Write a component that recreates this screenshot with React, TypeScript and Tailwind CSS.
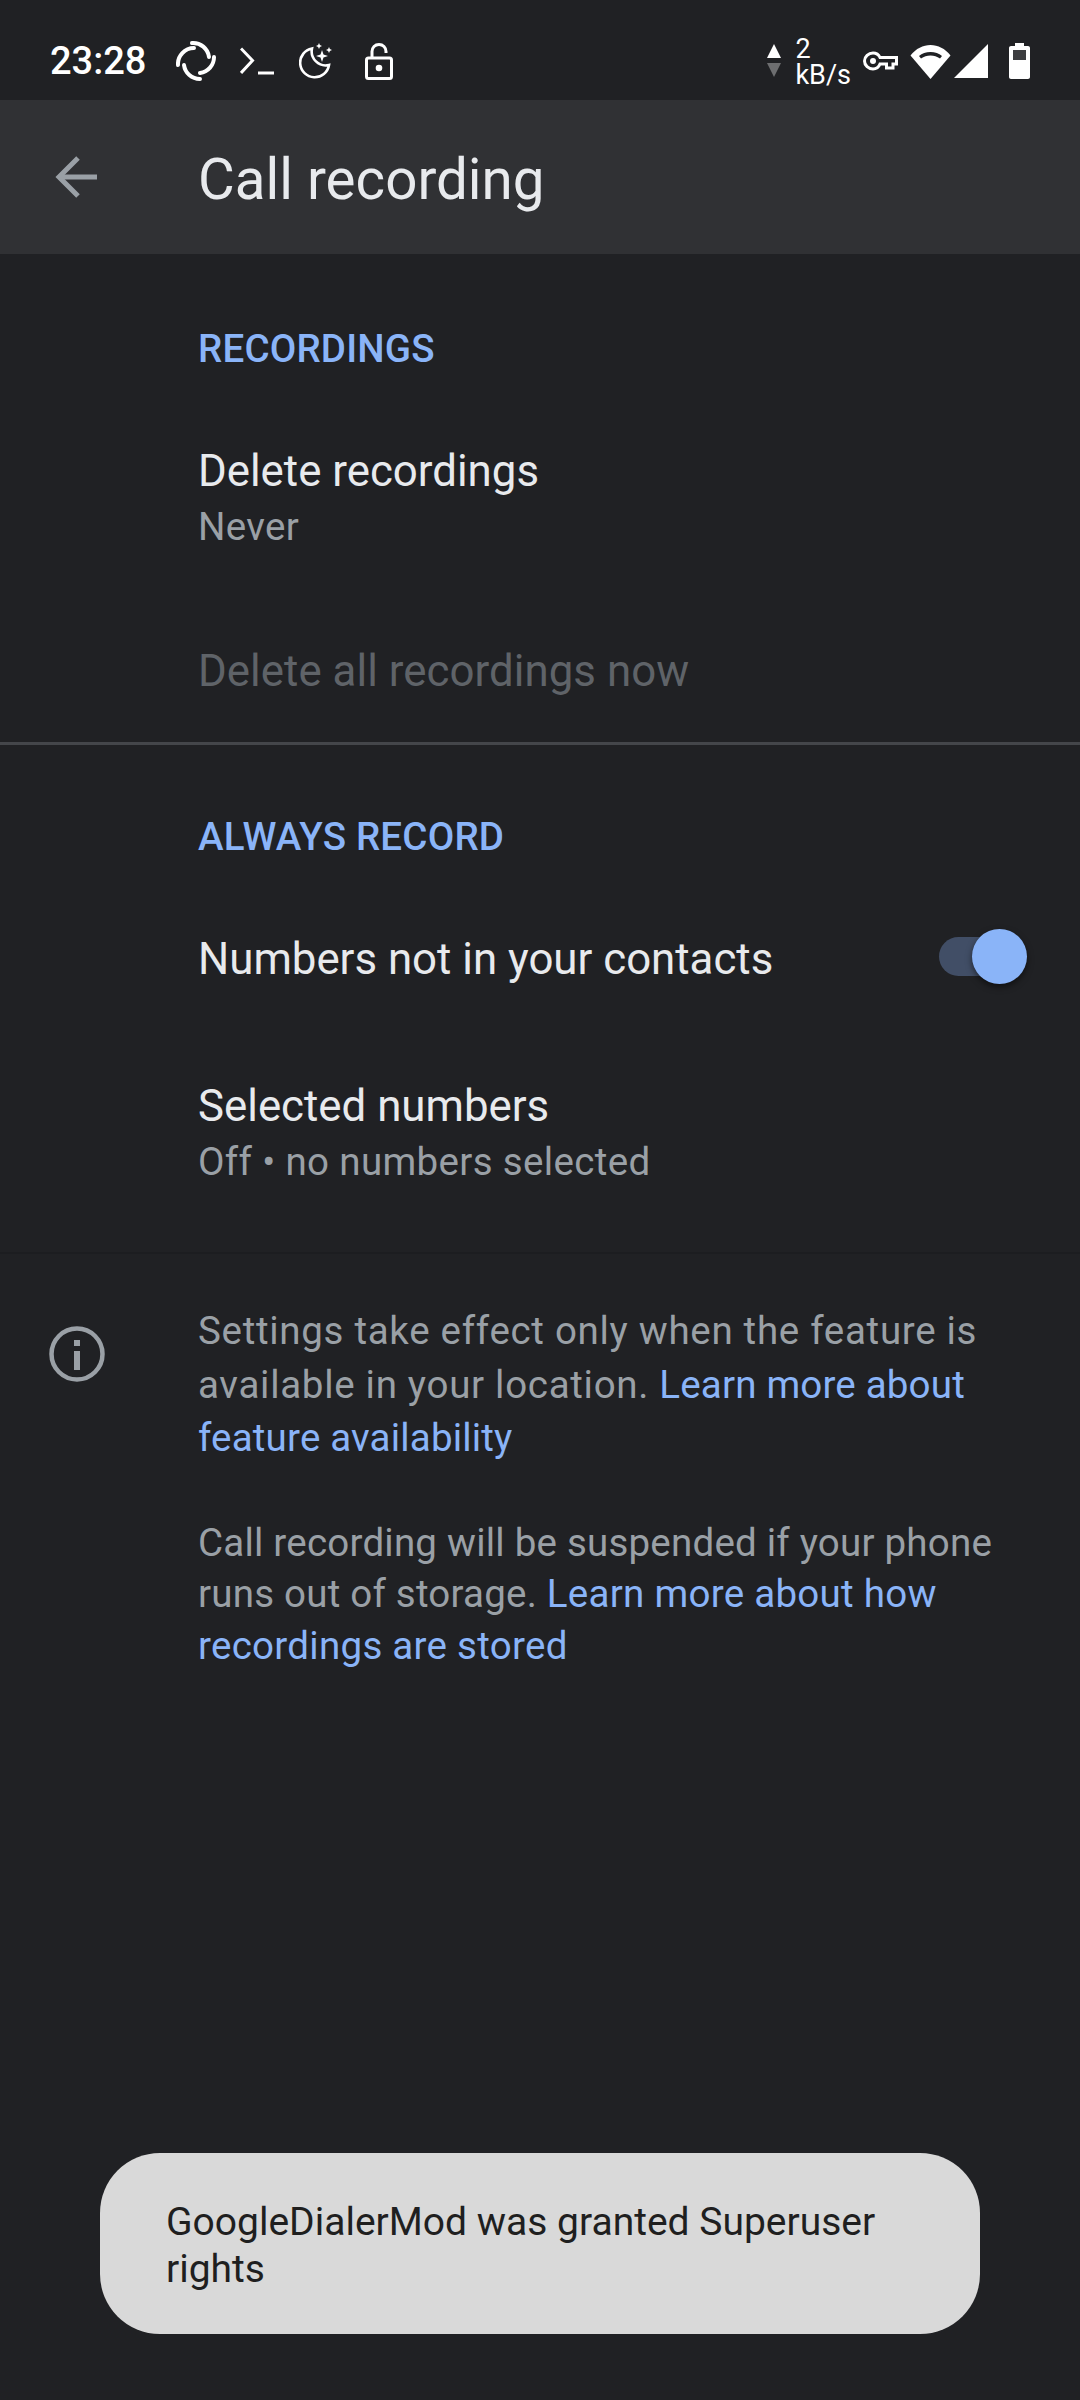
const sans = "font-['Roboto','Liberation_Sans',sans-serif]";

function ElementIcon() {
	return (
		<svg width="40" height="42" viewBox="0 0 40 42" fill="none" stroke="white" strokeWidth="4" strokeLinecap="round">
			<path d="M16 3A16 16 0 0 1 33 17" />
			<path d="M38 17A16 16 0 0 1 24 33" />
			<path d="M24 39A16 16 0 0 1 8 25" />
			<path d="M2 25A16 16 0 0 1 18 8" />
		</svg>
	);
}

function TerminalIcon() {
	return (
		<svg width="34" height="28" viewBox="0 0 34 28" fill="none" stroke="white" strokeWidth="3">
			<path d="M1 1.500L12.500 13.500L1 26" />
			<path d="M18 26H34" />
		</svg>
	);
}

function MoonIcon() {
	return (
		<svg width="34" height="36" viewBox="0 0 34 36" fill="none">
			<path d="M13 5.500A14.500 14.500 0 1 0 30 22A14 14 0 0 1 13 5.500Z" stroke="white" strokeWidth="2.600" />
			<path d="M23 7L24.500 11.500L29 13L24.500 14.500L23 19L21.500 14.500L17 13L21.500 11.500Z" fill="white" />
			<path d="M20 0L20.900 2.100L23 3L20.900 3.900L20 6L19.100 3.900L17 3L19.100 2.100Z" fill="white" />
			<path d="M30 4L30.900 6.100L33 7L30.900 7.900L30 10L29.100 7.900L27 7L29.100 6.100Z" fill="white" />
		</svg>
	);
}

function LockIcon() {
	return (
		<svg width="28" height="37" viewBox="0 0 28 37" fill="none" stroke="white" strokeWidth="3">
			<rect x="1.500" y="15" width="25" height="20.500" rx="2" />
			<path d="M7 15V8.500C7 4.500 10 1.500 14 1.500C18 1.500 21 4.500 21 8.500V10" />
			<circle cx="14" cy="25" r="3.300" fill="white" stroke="none" />
		</svg>
	);
}

function TrafficArrows() {
	return (
		<svg width="16" height="34" viewBox="0 0 16 34">
			<path d="M8 0L15 14H1Z" fill="white" />
			<path d="M1 19H15L8 33Z" fill="white" opacity="0.35" />
		</svg>
	);
}

function KeyIcon() {
	return (
		<svg width="35" height="20" viewBox="0 0 35 20" fill="none">
			<path d="M10 2C13.500 2 15.800 3.800 17 6.500H33.500V13H30V17H23.500V13H17C15.800 16 13.500 18 10 18C5.500 18 1.500 14.500 1.500 10C1.500 5.500 5.500 2 10 2Z" stroke="white" strokeWidth="3" />
			<circle cx="10" cy="10" r="3" fill="white" />
		</svg>
	);
}

function WifiIcon() {
	return (
		<svg width="41" height="35" viewBox="0 0 41 35" fill="none">
			<path d="M20.500 35L0.500 11.500C6 4.500 13 1 20.500 1C28 1 35 4.500 40.500 11.500Z" fill="white" />
			<path d="M9 12C12 9.500 16 8 20.500 8C25 8 29 9.500 32 12L30 14.500C27 12.500 24 11.500 20.500 11.500C17 11.500 14 12.500 11 14.500Z" fill="#202124" />
		</svg>
	);
}

function SignalIcon() {
	return (
		<svg width="34" height="34" viewBox="0 0 34 34">
			<path d="M34 0V34H0Z" fill="white" />
		</svg>
	);
}

function BatteryIcon() {
	return (
		<svg width="21" height="36" viewBox="0 0 21 36">
			<path d="M6 0H15V3H19C20.100 3 21 3.900 21 5V34C21 35.100 20.100 36 19 36H2C0.900 36 0 35.100 0 34V5C0 3.900 0.900 3 2 3H6Z" fill="white" />
			<rect x="4" y="7" width="13" height="10" fill="#3c3d40" />
		</svg>
	);
}

function StatusBar() {
	return (
		<div className="flex h-[100px] items-center bg-[#202124] pt-[22px] pr-[50px] pl-[50px] text-white">
			<span className="mr-[30px] text-[38px] leading-none font-medium">23:28</span>
			<ElementIcon />
			<span className="ml-[24px]"><TerminalIcon /></span>
			<span className="ml-[25px]"><MoonIcon /></span>
			<span className="ml-[32px]"><LockIcon /></span>
			<div className="ml-auto flex items-center">
				<TrafficArrows />
				<div className="mt-[2px] ml-[13px] flex flex-col text-[27px] leading-[26px]">
					<span>2</span>
					<span>kB/s</span>
				</div>
				<span className="ml-[12px]"><KeyIcon /></span>
				<span className="ml-[12px]"><WifiIcon /></span>
				<span className="ml-[3px]"><SignalIcon /></span>
				<span className="ml-[21px]"><BatteryIcon /></span>
			</div>
		</div>
	);
}

function ToolBar() {
	return (
		<div className="flex h-[154px] items-center bg-[#303134]">
			<svg className="ml-[54px]" width="44" height="44" viewBox="0 0 44 44" fill="none" stroke="#9aa0a6" strokeWidth="5">
				<path d="M43 22H5" />
				<path d="M24 3L5 22L24 41" />
			</svg>
			<h1 className="mt-[7px] ml-[100px] text-[56.500px] leading-none text-[#e8eaed]">Call recording</h1>
		</div>
	);
}

function SectionTitle({ children }: { children: string }) {
	return <div className="text-[38.500px] leading-[52px] font-medium tracking-[0.2px] text-[#8ab4f8]">{children}</div>;
}

function TwoLineRow({ title, summary }: { title: string; summary: string }) {
	return (
		<div>
			<div className="text-[43.800px] leading-[56px] text-[#e8eaed]">{title}</div>
			<div className="text-[38.500px] leading-[56px] tracking-[0.35px] text-[#9aa0a6]">{summary}</div>
		</div>
	);
}

function Toggle() {
	return (
		<div className="relative mb-[6px] h-[39px] w-[88px]">
			<div className="absolute top-0 left-0 h-[39px] w-[71px] rounded-full bg-[#414e66]" />
			<div className="absolute top-[-8px] right-0 h-[55px] w-[55px] rounded-full bg-[#8ab4f8] shadow-[0_3px_6px_rgba(0,0,0,0.5)]" />
		</div>
	);
}

function InfoIcon() {
	return (
		<svg width="56" height="56" viewBox="0 0 56 56" fill="none">
			<circle cx="28" cy="28" r="25.500" stroke="#9aa0a6" strokeWidth="4.500" />
			<rect x="25" y="25" width="6" height="19" fill="#9aa0a6" />
			<rect x="25" y="14" width="6" height="6" fill="#9aa0a6" />
		</svg>
	);
}

export default function App() {
	return (
		<div className={`relative flex h-[2400px] w-[1080px] flex-col overflow-hidden bg-[#202124] ${sans}`}>
			<StatusBar />
			<ToolBar />

			<div className="pt-[69px] pl-[198px]">
				<SectionTitle>RECORDINGS</SectionTitle>
				<div className="mt-[68px]">
					<TwoLineRow title="Delete recordings" summary="Never" />
				</div>
				<div className="mt-[88px] text-[43.800px] leading-[56px] tracking-[0.05px] text-[#5f6368]">Delete all recordings now</div>
			</div>

			<div className="mt-[43px] h-[3px] bg-[#44464a]" />

			<div className="pt-[66px] pl-[198px]">
				<SectionTitle>ALWAYS RECORD</SectionTitle>
				<div className="mt-[68px] flex items-center justify-between pr-[53px]">
					<div className="text-[43.800px] leading-[56px] text-[#e8eaed]">Numbers not in your contacts</div>
					<Toggle />
				</div>
				<div className="mt-[91px]">
					<TwoLineRow title="Selected numbers" summary="Off • no numbers selected" />
				</div>
			</div>

			<div className="mt-[62px] h-[2px] bg-[#1c1d20]" />

			<div className="flex pt-[50px]">
				<div className="w-[198px] shrink-0 pt-[22px] pl-[49px]">
					<InfoIcon />
				</div>
				<div className="w-[810px] text-[38.500px] text-[#9aa0a6]">
					<p className="leading-[53.500px] tracking-[0.7px]">
						Settings take effect only when the feature is available in your location.{" "}
						<span className="tracking-[0.18px] text-[#8ab4f8]">Learn more about feature availability</span>
					</p>
					<p className="mt-[52px] leading-[51.500px] tracking-[0.22px]">
						Call recording will be suspended if your phone runs out of storage.{" "}
						<span className="tracking-[0.28px] text-[#8ab4f8]">Learn more about how recordings are stored</span>
					</p>
				</div>
			</div>

			<div className="absolute top-[2153px] left-[100px] w-[880px] rounded-[60px] bg-[#d9d9d9] pt-[46px] pr-[67px] pb-[41px] pl-[66px] text-[39px] leading-[47px] text-[#1f1f1f]">
				GoogleDialerMod was granted Superuser rights
			</div>
		</div>
	);
}
